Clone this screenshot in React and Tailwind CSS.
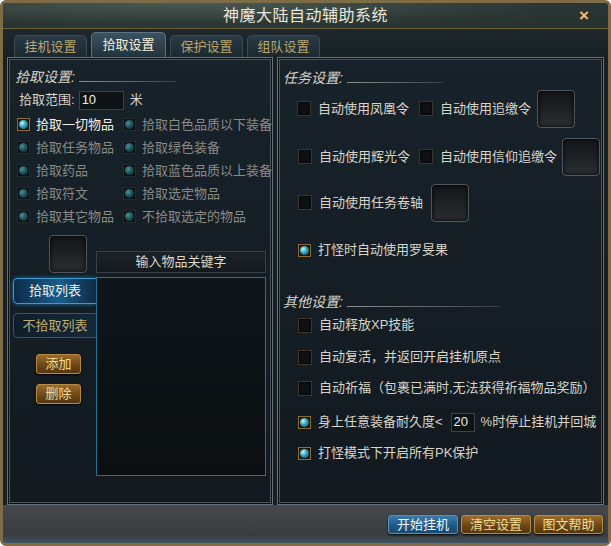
import React from 'react';

// 拾取设置面板 - 游戏辅助窗口
const FONT = { fontFamily: '"Liberation Sans", "Noto Sans CJK SC", sans-serif' };

const Orb = ({ on }) => (
    <span className={on
        ? 'w-[13px] h-[13px] shrink-0 flex items-center justify-center border border-[#8c6b38] bg-[#1b150c]'
        : 'w-[13px] h-[13px] shrink-0 flex items-center justify-center border border-[#262c2e] bg-[#0d1214]'}>
        <span className={on
            ? 'w-[9px] h-[9px] rounded-full bg-[radial-gradient(circle_at_35%_35%,#d8f8ff,#35aac2_40%,#0b3c4a)]'
            : 'w-[9px] h-[9px] rounded-full bg-[radial-gradient(circle_at_35%_35%,#4f9096,#1a4f56_50%,#0a2226)]'} />
    </span>
);

const Box = () => (
    <span className="w-[14px] h-[15px] shrink-0 border border-[#3e3629] bg-[#0d1113] shadow-[inset_0_0_3px_#000]" />
);

const Slot = ({ className = '' }) => (
    <div className={`w-[38px] h-[38px] rounded-[4px] border border-[#4f575d] bg-[linear-gradient(#121619,#2a2e31)] shadow-[inset_0_0_4px_#000] ${className}`} />
);

const Heading = ({ text, line }) => (
    <div className="flex items-center h-[20px]">
        <span className="italic text-[14px] text-[#d7d3c7]">{text}</span>
        <span className={line} />
    </div>
);

const Tab = ({ label, active }) => (
    <div className={active
        ? 'w-[75px] h-[25px] flex items-center justify-center rounded-t-[5px] border border-b-0 border-[#5e7380] bg-[linear-gradient(#3b5261,#22323c)] text-[#f3eedc]'
        : 'w-[73px] h-[22px] flex items-center justify-center rounded-t-[5px] border border-b-0 border-[#3b4b55] bg-[linear-gradient(#2a3b46,#1a2830)] text-[#b9a66f]'}>
        {label}
    </div>
);

const GoldBtn = ({ label, className = '' }) => (
    <div className={`flex items-center justify-center rounded-[3px] border border-[#b78b43] bg-[linear-gradient(#9a6c2a,#6a4516_60%,#55360f)] text-[#f1da92] shadow-[0_1px_2px_#000] ${className}`}>
        {label}
    </div>
);

const leftRows = [
    ['拾取一切物品', true, '拾取白色品质以下装备'],
    ['拾取任务物品', false, '拾取绿色装备'],
    ['拾取药品', false, '拾取蓝色品质以上装备'],
    ['拾取符文', false, '拾取选定物品'],
    ['拾取其它物品', false, '不拾取选定的物品'],
];

export default function App() {
    return (
        <div style={FONT} className="w-[611px] h-[546px] relative overflow-hidden rounded-[6px] border-[3px] border-[#7d6c45] bg-[#3f4244] text-[13px] flex flex-col">
            {/* 标题栏 */}
            <div className="h-[26px] shrink-0 flex items-center justify-center bg-[radial-gradient(ellipse_at_30%_0%,#4b5a55,#2b3734_60%,#25302e)] border-b border-[#6b5e3c]">
                <span className="text-[16px] text-[#ece7da] tracking-[0.5px]">神魔大陆自动辅助系统</span>
                <span className="absolute right-[19px] top-[4px] text-[#f0c07a] text-[17px] leading-none font-bold">×</span>
            </div>

            {/* 标签页 */}
            <div className="h-[28px] shrink-0 flex items-end gap-[4px] pl-[11px] bg-[linear-gradient(#1f292d,#172024)]">
                <Tab label="挂机设置" />
                <Tab label="拾取设置" active />
                <Tab label="保护设置" />
                <Tab label="组队设置" />
            </div>

            {/* 主体 */}
            <div className="h-[448px] shrink-0 flex gap-[4px] px-[4px] bg-[#172024]">
                {/* 左侧面板 */}
                <div className="w-[266px] border border-[#67717a] shadow-[inset_0_0_0_1px_#0a0f12,inset_0_0_0_2px_#4a545b] bg-[linear-gradient(#18222a,#121a20)] pl-[7px] pt-[9px] text-[#d8d4c8]">
                    <Heading text="拾取设置:" line="ml-[4px] mt-[8px] w-[97px] h-px bg-[linear-gradient(90deg,#8a8f92,#3a4044)]" />
                    <div className="flex items-center mt-[3px] pl-[4px] h-[20px]">
                        <span>拾取范围:</span>
                        <span className="ml-[4px] w-[45px] h-[19px] border border-[#3c4347] bg-[#0d1215] flex items-center pl-[2px] text-[#f0ede4]">10</span>
                        <span className="ml-[6px]">米</span>
                    </div>
                    <div className="mt-[3px] flex flex-col">
                        {leftRows.map(([a, on, b]) => (
                            <div key={a} className="h-[23px] flex items-center">
                                <div className="w-[108px] flex items-center gap-[6px] pl-[2px]">
                                    <Orb on={on} />
                                    <span className={on ? 'text-[#f2efe6]' : 'text-[#8a8a86]'}>{a}</span>
                                </div>
                                <div className="flex items-center gap-[6px]">
                                    <Orb />
                                    <span className="text-[#8a8a86] whitespace-nowrap">{b}</span>
                                </div>
                            </div>
                        ))}
                    </div>

                    <div className="mt-[7px] -ml-[7px] flex items-start">
                        <div className="w-[88px] shrink-0 flex flex-col">
                            <Slot className="ml-[41px]" />
                            <div className="mt-[5px] h-[26px] ml-[5px] rounded-l-[5px] border border-r-0 border-[#3f9ad0] bg-[linear-gradient(90deg,#0c2c48,#1b5d8e_55%,#0c2a44)] shadow-[0_0_4px_#1f74b0] flex items-center justify-center text-[#f3f0e6]">
                                拾取列表
                            </div>
                            <div className="mt-[9px] h-[25px] ml-[5px] rounded-l-[5px] border border-r-0 border-[#245a7e] bg-[linear-gradient(90deg,#0f1e2a,#15283a)] flex items-center justify-center text-[#c2ad70]">
                                不拾取列表
                            </div>
                            <GoldBtn label="添加" className="mt-[16px] ml-[28px] w-[45px] h-[20px]" />
                            <GoldBtn label="删除" className="mt-[10px] ml-[28px] w-[45px] h-[20px]" />
                        </div>
                        <div className="w-[170px] shrink-0 flex flex-col mt-[16px]">
                            <div className="h-[22px] border border-[#384046] bg-[linear-gradient(#1c2328,#14191d)] flex items-center justify-center text-[#dcd8cc]">
                                输入物品关键字
                            </div>
                            <div className="mt-[4px] h-[199px] border border-[#2a6f94] bg-[linear-gradient(#0f1519,#0b0f12)]" />
                        </div>
                    </div>
                </div>

                {/* 右侧面板 */}
                <div className="w-[327px] border border-[#67717a] shadow-[inset_0_0_0_1px_#0a0f12,inset_0_0_0_2px_#4a545b] bg-[linear-gradient(#18222a,#121a20)] pl-[5px] pt-[10px] text-[#d8d4c8]">
                    <Heading text="任务设置:" line="ml-[4px] mt-[8px] w-[96px] h-px bg-[linear-gradient(90deg,#8a8f92,#3a4044)]" />
                    <div className="pl-[14px] flex flex-col">
                        <div className="mt-[2px] h-[37px] flex items-center">
                            <div className="w-[122px] flex items-center gap-[7px]"><Box /><span>自动使用凤凰令</span></div>
                            <div className="flex items-center gap-[7px]"><Box /><span>自动使用追缴令</span></div>
                            <Slot className="ml-[6px]" />
                        </div>
                        <div className="mt-[11px] h-[37px] flex items-center">
                            <div className="w-[122px] flex items-center gap-[7px] pl-[1px]"><Box /><span>自动使用辉光令</span></div>
                            <div className="flex items-center gap-[7px]"><Box /><span>自动使用信仰追缴令</span></div>
                            <Slot className="ml-[5px]" />
                        </div>
                        <div className="mt-[9px] h-[37px] flex items-center pl-[1px] gap-[7px]">
                            <Box /><span>自动使用任务卷轴</span>
                            <Slot className="ml-[1px]" />
                        </div>
                        <div className="mt-[19px] h-[20px] flex items-center pl-[1px] gap-[7px]">
                            <Orb on /><span>打怪时自动使用罗旻果</span>
                        </div>
                    </div>

                    <div className="mt-[32px]">
                        <Heading text="其他设置:" line="ml-[4px] mt-[8px] w-[153px] h-px bg-[linear-gradient(90deg,#8a8f92,#3a4044)]" />
                    </div>
                    <div className="pl-[15px] flex flex-col">
                        <div className="mt-[2px] h-[22px] flex items-center gap-[7px]"><Box /><span>自动释放XP技能</span></div>
                        <div className="mt-[10px] h-[22px] flex items-center gap-[7px]"><Box /><span>自动复活，并返回开启挂机原点</span></div>
                        <div className="mt-[9px] h-[22px] flex items-center gap-[7px]"><Box /><span className="whitespace-nowrap">自动祈福（包裹已满时,无法获得祈福物品奖励）</span></div>
                        <div className="mt-[12px] h-[22px] flex items-center gap-[7px]">
                            <Orb on />
                            <span className="whitespace-nowrap">身上任意装备耐久度&lt;</span>
                            <span className="ml-[1px] w-[24px] h-[19px] border border-[#3c4347] bg-[#0d1215] flex items-center pl-[2px] text-[#f0ede4]">20</span>
                            <span className="ml-[-1px] whitespace-nowrap">%时停止挂机并回城</span>
                        </div>
                        <div className="mt-[9px] h-[22px] flex items-center gap-[7px]"><Orb on /><span>打怪模式下开启所有PK保护</span></div>
                    </div>
                </div>
            </div>

            {/* 底部按钮 */}
            <div className="flex-1 flex justify-end gap-[3px] pr-[5px] pt-[10px] bg-[linear-gradient(#45484a,#3a3d3f_80%,#3d5466)]">
                <div className="w-[70px] h-[19px] flex items-center justify-center rounded-[3px] border border-[#5a8fb6] bg-[linear-gradient(#3a7aab,#1d5a88_55%,#164a72)] text-[#f2f4f6] shadow-[0_1px_2px_#000]">
                    开始挂机
                </div>
                <GoldBtn label="清空设置" className="w-[70px] h-[19px]" />
                <GoldBtn label="图文帮助" className="w-[69px] h-[19px]" />
            </div>
        </div>
    );
}
